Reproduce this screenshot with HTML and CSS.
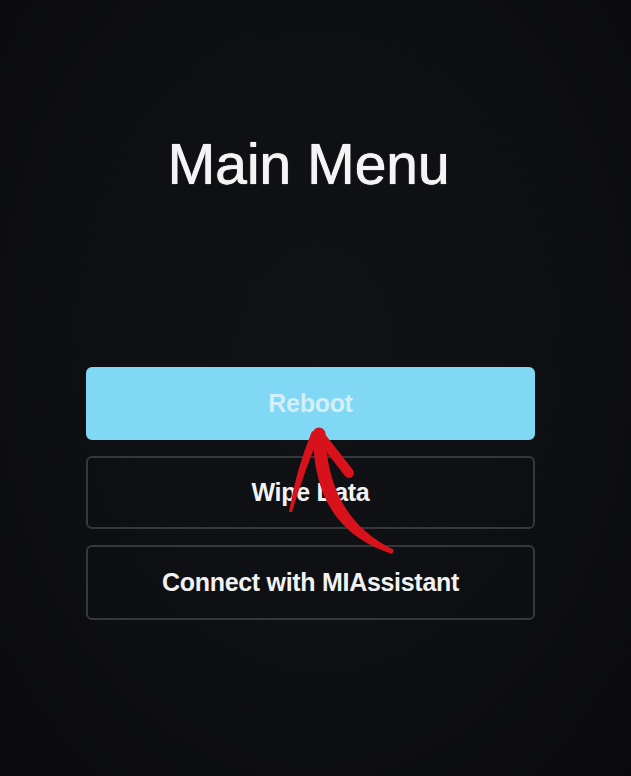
FILE: index.html
```html
<!DOCTYPE html>
<html>
<head>
<meta charset="utf-8">
<link rel="stylesheet" href="styles.css">
</head>
<body>
<div class="screen">
  <h1 class="title">Main Menu</h1>
  <div class="menu">
    <div class="btn btn-primary">Reboot</div>
    <div class="btn">Wipe Data</div>
    <div class="btn btn-tall">Connect with MIAssistant</div>
  </div>
  <svg class="arrow" width="631" height="776" viewBox="0 0 631 776">
    <g fill="#d8121b">
      <path d="M313 436 C314 494 335 535 392 554 L394 550 C346 526 328 488 325 434 Z"/>
      <path d="M312 431 Q296 470 289 512 L292 512 Q304 472 319 436 Z"/>
      <circle cx="319" cy="434" r="6.5"/>
    </g>
    <path d="M321 437 L349 473" stroke="#d8121b" stroke-width="10" stroke-linecap="round" fill="none"/>
  </svg>
</div>
</body>
</html>
```
FILE: styles.css
```css
html, body {
  margin: 0;
  padding: 0;
  background: #0e0f12;
}
.screen {
  position: relative;
  width: 631px;
  height: 776px;
  overflow: hidden;
  background: radial-gradient(ellipse at 50% 45%, #111216 0%, #0e0f12 60%, #0a0a0c 100%);
  font-family: "Liberation Sans", Arial, sans-serif;
  display: flex;
  flex-direction: column;
}
.title {
  margin: 136px 0 0 0;
  padding-right: 14px;
  font-size: 57px;
  line-height: 56px;
  font-weight: normal;
  color: #f4f4f4;
  text-shadow: 0 0 1px #f4f4f4, 0.5px 0 0 #f4f4f4;
  text-align: center;
}
.menu {
  margin: 175px 0 0 86px;
  width: 449px;
  display: flex;
  flex-direction: column;
  gap: 16px;
}
.btn {
  box-sizing: border-box;
  height: 73px;
  border: 2px solid #37383b;
  border-radius: 6px;
  display: flex;
  align-items: center;
  justify-content: center;
  color: #f2f2f2;
  font-size: 25px;
  font-weight: bold;
  letter-spacing: -0.3px;
}
.btn-primary {
  background: #80d8f5;
  border-color: #80d8f5;
  color: #d2effa;
}
.btn-tall {
  height: 75px;
}
.arrow {
  position: absolute;
  left: 0;
  top: 0;
}
```
